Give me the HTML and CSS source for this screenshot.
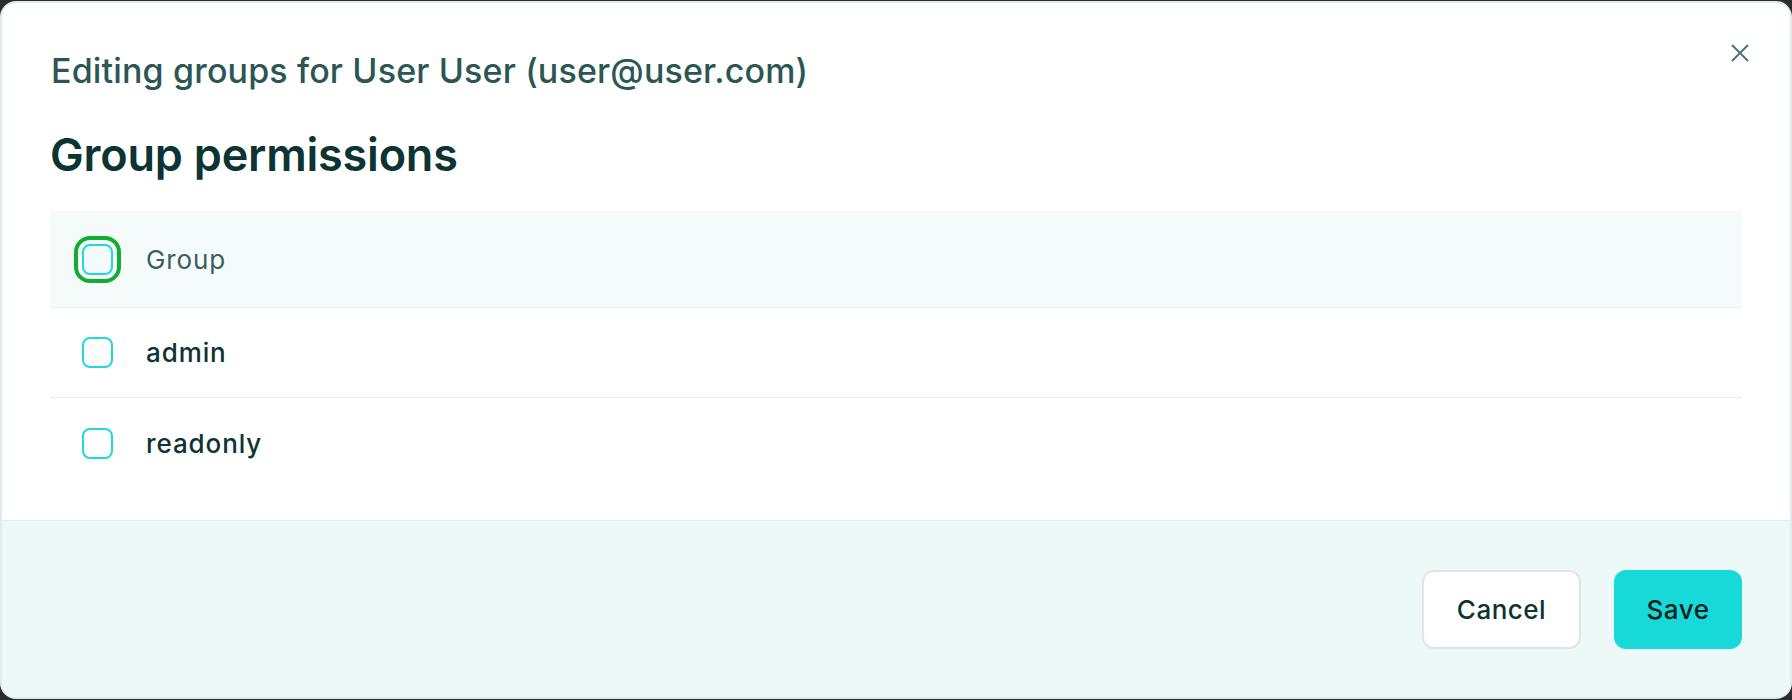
FILE: index.html
```html
<!DOCTYPE html>
<html lang="en">
<head>
<meta charset="utf-8">
<title>Edit groups</title>
<link rel="stylesheet" href="styles.css">
</head>
<body>
<div class="modal" role="dialog" aria-labelledby="modal-title">
  <header class="modal-header">
    <h2 class="modal-title" id="modal-title">Editing groups for User User (user@user.com)</h2>
    <button class="close-btn" type="button" aria-label="Close">
      <svg width="18" height="18" viewBox="0 0 18 18" aria-hidden="true">
        <path d="M1.5 1.5 L16.5 16.5 M16.5 1.5 L1.5 16.5" stroke="currentColor" stroke-width="2" stroke-linecap="round" fill="none"/>
      </svg>
    </button>
  </header>

  <section class="modal-body">
    <h3 class="section-title">Group permissions</h3>
    <div class="group-list">
      <label class="group-row group-row--head">
        <span class="checkbox checkbox--focus"></span>
        <span class="group-label group-label--head">Group</span>
      </label>
      <label class="group-row">
        <span class="checkbox"></span>
        <span class="group-label">admin</span>
      </label>
      <label class="group-row">
        <span class="checkbox"></span>
        <span class="group-label">readonly</span>
      </label>
    </div>
  </section>

  <footer class="modal-footer">
    <button class="btn btn-secondary" type="button">Cancel</button>
    <button class="btn btn-primary" type="button">Save</button>
  </footer>
</div>
</body>
</html>
```

FILE: styles.css
```css
* {
  box-sizing: border-box;
}

html,
body {
  margin: 0;
  height: 700px;
}

body {
  background: #2b2c2c;
  padding: 1px 0;
  font-family: Inter, "Noto Sans", sans-serif;
  overflow: hidden;
}

.modal {
  height: 698px;
  background: #ffffff;
  border: 2px solid #dfecee;
  border-radius: 16px;
  overflow: hidden;
  display: flex;
  flex-direction: column;
}

/* Header */
.modal-header {
  display: flex;
  align-items: flex-start;
  justify-content: space-between;
  padding: 48px 40px 0 49px;
}

.modal-title {
  margin: 0;
  font-size: 34px;
  line-height: 40px;
  font-weight: 500;
  color: #2c5654;
  letter-spacing: 0.15px;
}

.close-btn {
  display: flex;
  align-items: center;
  justify-content: center;
  width: 20px;
  height: 20px;
  margin-top: -8px;
  padding: 0;
  border: 0;
  background: none;
  color: #4b7775;
  cursor: pointer;
}

/* Body */
.modal-body {
  flex: 1;
  min-height: 0;
  padding: 0 48px;
}

.section-title {
  margin: 36px 0 0;
  font-size: 45px;
  line-height: 56px;
  font-weight: 600;
  color: #0b3432;
  letter-spacing: -0.2px;
}

.group-list {
  margin-top: 28px;
  display: flex;
  flex-direction: column;
}

.group-row {
  display: flex;
  align-items: center;
  gap: 33px;
  height: 90px;
  padding-left: 32px;
  border-bottom: 1px solid #e4eff0;
}

.group-row:last-child {
  border-bottom: 0;
}

.group-row--head {
  height: 97px;
  background: #f5fbfb;
}

.checkbox {
  flex: none;
  width: 31px;
  height: 31px;
  border: 2px solid #23d8dc;
  border-radius: 8px;
  background: transparent;
}

/* keyboard focus ring on the select-all box */
.checkbox--focus {
  outline: 4px solid #10ae2e;
  outline-offset: 4px;
}

.group-label {
  font-size: 26px;
  font-weight: 500;
  color: #0c3432;
  letter-spacing: 0.9px;
}

.group-label--head {
  font-weight: 400;
  color: #3a5f5d;
}

/* Footer */
.modal-footer {
  flex: none;
  height: 177px;
  display: flex;
  align-items: center;
  justify-content: flex-end;
  gap: 33px;
  padding: 0 48px 0 0;
  background: #edf9f9;
  border-top: 1px solid #e2eff0;
}

.btn {
  height: 79px;
  border-radius: 12px;
  font-family: inherit;
  font-size: 26px;
  font-weight: 500;
  letter-spacing: 0.5px;
  cursor: pointer;
}

.btn-secondary {
  width: 159px;
  background: #ffffff;
  border: 2px solid #e2e5e8;
  color: #0c3432;
}

.btn-primary {
  width: 128px;
  background: #17dad8;
  border: 0;
  color: #04201f;
}
```
